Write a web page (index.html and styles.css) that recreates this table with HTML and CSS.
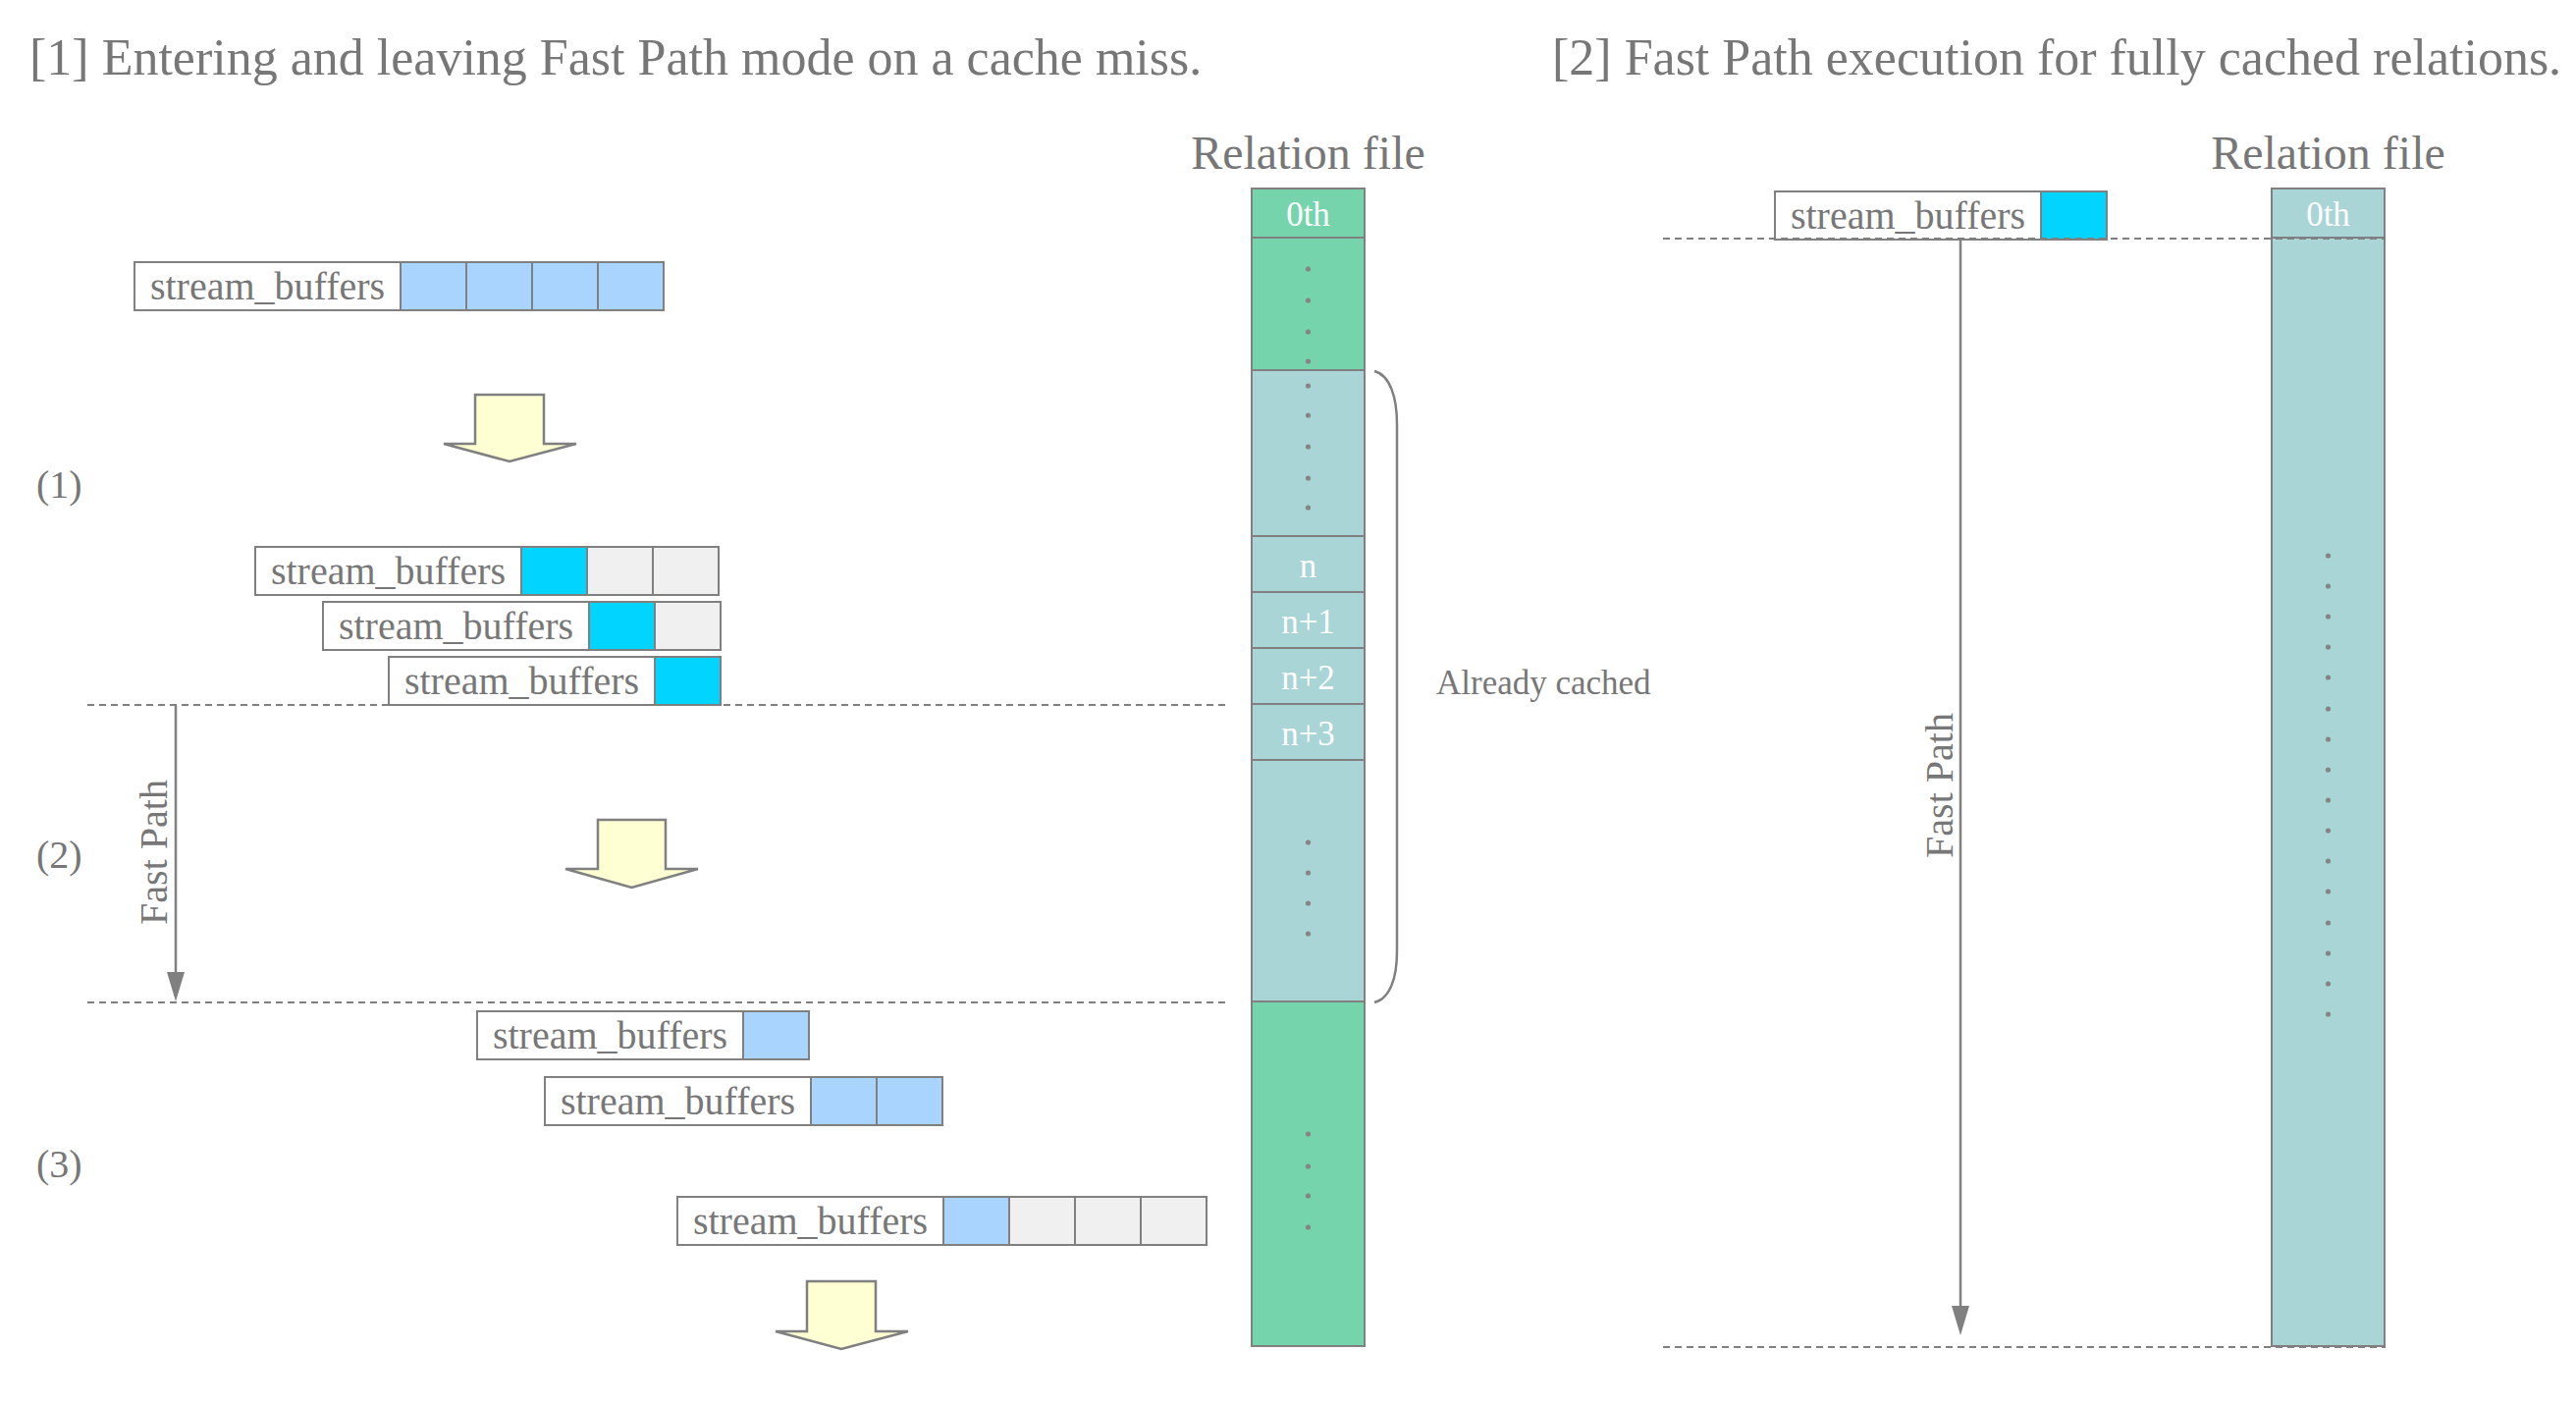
FILE: index.html
```html
<!DOCTYPE html>
<html lang="en">
<head>
<meta charset="utf-8">
<title>Fast Path</title>
<link rel="stylesheet" href="styles.css">
</head>
<body>
<div class="canvas">
  <header class="header">
    <h1 class="title">[1] Entering and leaving Fast Path mode on a cache miss.</h1>
    <h1 class="title">[2] Fast Path execution for fully cached relations.</h1>
  </header>

  <!-- left relation file -->
  <div class="relgroup rel-left">
    <div class="rel-label">Relation file</div>
    <div class="col">
      <div class="seg green s-0th">0th</div>
      <div class="seg green s-a"></div>
      <div class="seg teal s-b"></div>
      <div class="seg teal s-n">n</div>
      <div class="seg teal s-n">n+1</div>
      <div class="seg teal s-n">n+2</div>
      <div class="seg teal s-n">n+3</div>
      <div class="seg teal s-c"></div>
      <div class="seg green s-d"></div>
    </div>
  </div>

  <!-- right relation file -->
  <div class="relgroup rel-right">
    <div class="rel-label">Relation file</div>
    <div class="col">
      <div class="seg teal s-0th">0th</div>
      <div class="seg teal s-rest"></div>
    </div>
  </div>

  <div class="step step1">(1)</div>
  <div class="step step2">(2)</div>
  <div class="step step3">(3)</div>

  <div class="note">Already cached</div>

  <div class="vlabel vl-left">Fast Path</div>
  <div class="vlabel vl-right">Fast Path</div>

  <div class="buf row-a"><div class="lbl">stream_buffers</div><div class="cell blue"></div><div class="cell blue"></div><div class="cell blue"></div><div class="cell blue"></div></div>
  <div class="buf row-b"><div class="lbl">stream_buffers</div><div class="cell cyan"></div><div class="cell grey"></div><div class="cell grey"></div></div>
  <div class="buf row-c"><div class="lbl">stream_buffers</div><div class="cell cyan"></div><div class="cell grey"></div></div>
  <div class="buf row-d"><div class="lbl">stream_buffers</div><div class="cell cyan"></div></div>
  <div class="buf row-e"><div class="lbl">stream_buffers</div><div class="cell blue"></div></div>
  <div class="buf row-f"><div class="lbl">stream_buffers</div><div class="cell blue"></div><div class="cell blue"></div></div>
  <div class="buf row-g"><div class="lbl">stream_buffers</div><div class="cell blue"></div><div class="cell grey"></div><div class="cell grey"></div><div class="cell grey"></div></div>
  <div class="buf row-r"><div class="lbl">stream_buffers</div><div class="cell cyan"></div></div>

  <svg class="overlay" width="2624" height="1430" viewBox="0 0 2624 1430" xmlns="http://www.w3.org/2000/svg">
    <g class="dash">
      <line x1="89" y1="718" x2="1250" y2="718"/>
      <line x1="89" y1="1021" x2="1250" y2="1021"/>
      <line x1="1694" y1="243" x2="2430" y2="243"/>
      <line x1="1694" y1="1372" x2="2430" y2="1372"/>
    </g>
    <g class="thin">
      <line x1="179" y1="719" x2="179" y2="995"/>
      <line x1="1997" y1="245" x2="1997" y2="1335"/>
      <path d="M1400,378 C1416,382 1423,405 1423,432 L1423,969 C1423,996 1416,1017 1400,1021" fill="none"/>
    </g>
    <g class="head">
      <polygon points="170,990 188,990 179,1020"/>
      <polygon points="1988,1330 2006,1330 1997,1360"/>
    </g>
    <g class="block">
      <polygon points="484,402 554,402 554,452 587,452 519,470 452,452 484,452"/>
      <polygon points="609,835 678,835 678,885 711,885 643.5,904 576,885 609,885"/>
      <polygon points="822,1305 892,1305 892,1356 925,1356 857,1374 790,1356 822,1356"/>
    </g>
    <g class="dots">
      <circle cx="1332.5" cy="274" r="2.6"/>
      <circle cx="1332.5" cy="306" r="2.6"/>
      <circle cx="1332.5" cy="338" r="2.6"/>
      <circle cx="1332.5" cy="368" r="2.6"/>
      <circle cx="1332.5" cy="393" r="2.6"/>
      <circle cx="1332.5" cy="423" r="2.6"/>
      <circle cx="1332.5" cy="455" r="2.6"/>
      <circle cx="1332.5" cy="487" r="2.6"/>
      <circle cx="1332.5" cy="517" r="2.6"/>
      <circle cx="1332.5" cy="858" r="2.6"/>
      <circle cx="1332.5" cy="889" r="2.6"/>
      <circle cx="1332.5" cy="920" r="2.6"/>
      <circle cx="1332.5" cy="951" r="2.6"/>
      <circle cx="1332.5" cy="1155" r="2.6"/>
      <circle cx="1332.5" cy="1188" r="2.6"/>
      <circle cx="1332.5" cy="1218" r="2.6"/>
      <circle cx="1332.5" cy="1250" r="2.6"/>
      <circle cx="2371.5" cy="566" r="2.6"/>
      <circle cx="2371.5" cy="597" r="2.6"/>
      <circle cx="2371.5" cy="628" r="2.6"/>
      <circle cx="2371.5" cy="659" r="2.6"/>
      <circle cx="2371.5" cy="690" r="2.6"/>
      <circle cx="2371.5" cy="722" r="2.6"/>
      <circle cx="2371.5" cy="753" r="2.6"/>
      <circle cx="2371.5" cy="784" r="2.6"/>
      <circle cx="2371.5" cy="815" r="2.6"/>
      <circle cx="2371.5" cy="846" r="2.6"/>
      <circle cx="2371.5" cy="877" r="2.6"/>
      <circle cx="2371.5" cy="908" r="2.6"/>
      <circle cx="2371.5" cy="940" r="2.6"/>
      <circle cx="2371.5" cy="971" r="2.6"/>
      <circle cx="2371.5" cy="1002" r="2.6"/>
      <circle cx="2371.5" cy="1033" r="2.6"/>
    </g>
  </svg>
</div>
</body>
</html>
```

FILE: styles.css
```css
html, body {
  margin: 0;
  padding: 0;
  background: #ffffff;
}

.canvas {
  position: relative;
  width: 2624px;
  height: 1430px;
  overflow: hidden;
  font-family: "Liberation Serif", "Times New Roman", serif;
  color: #777777;
}

.header {
  display: grid;
  grid-template-columns: 1551px auto;
  padding: 29px 0 0 30px;
}

.title {
  margin: 0;
  font-size: 52px;
  line-height: 60px;
  font-weight: normal;
  white-space: nowrap;
  color: #777777;
}

/* relation file columns */
.relgroup {
  position: absolute;
  top: 132px;
  width: 300px;
  display: flex;
  flex-direction: column;
  align-items: center;
}

.rel-left { left: 1182.5px; }
.rel-right { left: 2221.5px; }

.rel-label {
  font-size: 48px;
  line-height: 48px;
  height: 48px;
  margin-bottom: 11px;
  white-space: nowrap;
}

.col {
  box-sizing: border-box;
  width: 117px;
  border: 2px solid #808080;
  display: flex;
  flex-direction: column;
}

.seg {
  box-sizing: border-box;
  border-bottom: 2px solid #808080;
  display: flex;
  align-items: center;
  justify-content: center;
  padding-top: 4px;
  color: #ffffff;
  font-size: 35px;
}

.seg:last-child { border-bottom: none; }

.green { background: #76d4ad; }
.teal { background: #a9d5d6; }

.s-0th { height: 50px; }
.s-a { height: 135px; }
.s-b { height: 169px; }
.s-n { height: 57px; }
.s-c { height: 246px; }
.s-d { height: 349px; }
.s-rest { height: 1127px; }

/* step labels */
.step {
  position: absolute;
  left: 37px;
  font-size: 40px;
  line-height: 44px;
}

.step1 { top: 472px; }
.step2 { top: 849px; }
.step3 { top: 1164px; }

.note {
  position: absolute;
  left: 1463px;
  top: 676px;
  font-size: 35px;
  line-height: 40px;
  white-space: nowrap;
}

.vlabel {
  position: absolute;
  font-size: 40px;
  line-height: 44px;
  white-space: nowrap;
  transform: translate(-50%, -50%) rotate(-90deg);
}

.vl-left { left: 157px; top: 868px; }
.vl-right { left: 1976px; top: 800px; }

/* stream buffers */
.buf {
  position: absolute;
  display: flex;
  height: 51px;
}

.buf > div {
  box-sizing: border-box;
  height: 51px;
  border: 2px solid #808080;
}

.lbl {
  width: 273px;
  background: #ffffff;
  font-size: 40px;
  line-height: 47px;
  text-align: center;
  white-space: nowrap;
}

.cell {
  width: 69px;
  margin-left: -2px;
}

.blue { background: #a8d4fd; }
.cyan { background: #00d4ff; }
.grey { background: #f0f0f0; }

.row-a { left: 136px; top: 266px; }
.row-b { left: 259px; top: 556px; }
.row-c { left: 328px; top: 612px; }
.row-d { left: 395px; top: 668px; }
.row-e { left: 485px; top: 1029px; }
.row-f { left: 554px; top: 1096px; }
.row-g { left: 689px; top: 1218px; }
.row-r { left: 1807px; top: 194px; }

/* overlay line art */
.overlay {
  position: absolute;
  left: 0;
  top: 0;
  pointer-events: none;
}

.dash line {
  stroke: #808080;
  stroke-width: 2;
  stroke-dasharray: 7 5;
}

.thin line,
.thin path {
  stroke: #808080;
  stroke-width: 2.5;
}

.head polygon {
  fill: #808080;
}

.block polygon {
  fill: #ffffd4;
  stroke: #808080;
  stroke-width: 2.5;
  stroke-linejoin: miter;
}

.dots circle {
  fill: #858585;
}
```
